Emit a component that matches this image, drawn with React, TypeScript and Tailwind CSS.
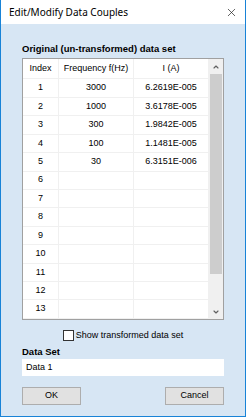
import { ChevronUp, ChevronDown, X } from 'lucide-react';

const rows = [
  { i: 1, f: '3000', a: '6.2619E-005' },
  { i: 2, f: '1000', a: '3.6178E-005' },
  { i: 3, f: '300', a: '1.9842E-005' },
  { i: 4, f: '100', a: '1.1481E-005' },
  { i: 5, f: '30', a: '6.3151E-006' },
  { i: 6, f: '', a: '' },
  { i: 7, f: '', a: '' },
  { i: 8, f: '', a: '' },
  { i: 9, f: '', a: '' },
  { i: 10, f: '', a: '' },
  { i: 11, f: '', a: '' },
  { i: 12, f: '', a: '' },
  { i: 13, f: '', a: '' },
];

const ui = { fontFamily: '"Liberation Sans", Arial, sans-serif' };

export default function App() {
  return (
    <div
      className="w-[246px] h-[417px] flex flex-col border-x border-b border-[#1883d7] bg-[#d7e6f4] text-[9px] text-black"
      style={ui}
    >
      <div className="h-[24px] shrink-0 bg-white flex items-center justify-between pl-[8px] pr-[7px]">
        <span className="text-[10px] text-black" style={{ fontFamily: '"Noto Sans", "Open Sans", sans-serif' }}>
          Edit/Modify Data Couples
        </span>
        <X className="w-[13px] h-[13px] text-[#222]" strokeWidth={1.3} />
      </div>

      <div className="flex flex-col px-[21px] pt-[19px]">
        <div className="font-bold leading-[12px] h-[12px] text-[9.5px]">Original (un-transformed) data set</div>

        <div className="mt-[3px] h-[262px] border border-[#a0a0a0] bg-white flex">
          <div className="flex-1 flex flex-col">
            <div className="flex h-[20.5px] border-b border-[#f0f0f0]">
              <div className="w-[36px] border-r border-[#f0f0f0] flex items-center justify-center">Index</div>
              <div className="w-[75px] border-r border-[#f0f0f0] flex items-center justify-center whitespace-nowrap">Frequency f(Hz)</div>
              <div className="flex-1 flex items-center justify-center">I (A)</div>
            </div>
            {rows.map((r) => (
              <div key={r.i} className="flex h-[18.5px] border-b border-[#f0f0f0]">
                <div className="w-[36px] border-r border-[#f0f0f0] flex items-center justify-center">{r.i}</div>
                <div className="w-[75px] border-r border-[#f0f0f0] flex items-center justify-center">{r.f}</div>
                <div className="flex-1 flex items-center justify-center">{r.a}</div>
              </div>
            ))}
          </div>
          <div className="w-[15px] bg-[#f0f0f0] flex flex-col items-center">
            <div className="h-[15px] flex items-center justify-center">
              <ChevronUp className="w-[8px] h-[8px] text-[#606060]" strokeWidth={3.5} />
            </div>
            <div className="w-[12px] h-[200px] bg-[#cdcdcd]" />
            <div className="flex-1" />
            <div className="h-[15px] flex items-center justify-center">
              <ChevronDown className="w-[8px] h-[8px] text-[#606060]" strokeWidth={3.5} />
            </div>
          </div>
        </div>

        <div className="mt-[10px] flex items-center justify-center gap-[2px] h-[11px]">
          <div className="w-[11px] h-[11px] border border-[#333] bg-white" />
          <span className="leading-[11px]">Show transformed data set</span>
        </div>

        <div className="mt-[5px] font-bold leading-[12px] h-[12px] text-[9.5px]">Data Set</div>
        <div className="mt-[1px] h-[17px] bg-white flex items-center pl-[4px]">Data 1</div>

        <div className="mt-[11px] flex justify-between">
          <button className="w-[59px] h-[18px] bg-[#e1e1e1] border border-[#adadad] flex items-center justify-center">
            OK
          </button>
          <button className="w-[59px] h-[18px] bg-[#e1e1e1] border border-[#adadad] flex items-center justify-center">
            Cancel
          </button>
        </div>
      </div>
    </div>
  );
}
